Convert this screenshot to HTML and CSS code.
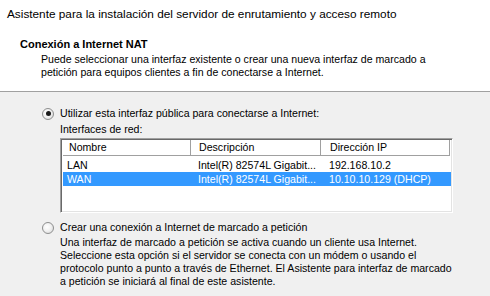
FILE: index.html
```html
<!DOCTYPE html>
<html lang="es">
<head>
  <meta charset="UTF-8">
  <title>Conexión a Internet NAT</title>
  <link rel="stylesheet" href="styles.css">
</head>
<body>
  <div class="header">
    <div class="title">Asistente para la instalación del servidor de enrutamiento y acceso remoto</div>
    <div class="heading">Conexión a Internet NAT</div>
    <div class="desc">Puede seleccionar una interfaz existente o crear una nueva interfaz de marcado a<br>petición para equipos clientes a fin de conectarse a Internet.</div>
  </div>

  <div class="content">
    <div class="option first">
      <span class="radio checked"></span>
      <span>Utilizar esta interfaz pública para conectarse a Internet:</span>
    </div>
    <div class="sub">
      <div class="list-label">Interfaces de red:</div>
      <div class="listbox">
        <div class="list-head">
          <div class="col c1">Nombre</div>
          <div class="col c2">Descripción</div>
          <div class="col c3">Dirección IP</div>
        </div>
        <div class="row">
          <div class="col c1">LAN</div>
          <div class="col c2">Intel(R) 82574L Gigabit...</div>
          <div class="col c3">192.168.10.2</div>
        </div>
        <div class="row selected">
          <div class="col c1">WAN</div>
          <div class="col c2">Intel(R) 82574L Gigabit...</div>
          <div class="col c3">10.10.10.129 (DHCP)</div>
        </div>
      </div>
    </div>

    <div class="option second">
      <span class="radio"></span>
      <span>Crear una conexión a Internet de marcado a petición</span>
    </div>
    <div class="sub note">Una interfaz de marcado a petición se activa cuando un cliente usa Internet.<br>Seleccione esta opción si el servidor se conecta con un módem o usando el<br>protocolo punto a punto a través de Ethernet. El Asistente para interfaz de marcado<br>a petición se iniciará al final de este asistente.</div>
  </div>
</body>
</html>
```

FILE: styles.css
```css
body {
  margin: 0;
  font-family: "Liberation Sans", Arial, sans-serif;
  font-size: 10.6px;
  color: #000;
  background-color: #f0f0f0;
  width: 490px;
  height: 296px;
  overflow: hidden;
}
.header {
  background-color: #fff;
  height: 92px;
  border-bottom: 1px solid #a0a0a0;
  box-sizing: border-box;
  padding-top: 6px;
}
.title {
  font-size: 11.8px;
  line-height: 16px;
  padding-left: 7px;
}
.heading {
  font-weight: bold;
  font-size: 11px;
  line-height: 13px;
  margin-top: 16px;
  padding-left: 20px;
}
.desc {
  line-height: 13px;
  margin-top: 2px;
  padding-left: 41px;
}
.content {
  padding-left: 42px;
}
.option {
  display: flex;
  align-items: center;
  gap: 6px;
  line-height: 13px;
}
.option.first {
  margin-top: 15px;
}
.option.second {
  margin-top: 8px;
}
.radio {
  width: 10px;
  height: 10px;
  border: 1px solid #8e8f8f;
  border-radius: 50%;
  background: radial-gradient(circle at 40% 40%, #fff 0, #f4f4f4 40%, #d4d4d4 100%);
  display: flex;
  align-items: center;
  justify-content: center;
  flex: none;
}
.radio.checked::after {
  content: "";
  width: 5px;
  height: 5px;
  border-radius: 50%;
  background-color: #1a1a1a;
}
.sub {
  padding-left: 18px;
}
.list-label {
  line-height: 13px;
  margin-top: 3px;
  margin-bottom: 2px;
}
.listbox {
  width: 393px;
  height: 75px;
  box-sizing: border-box;
  background-color: #fff;
  border-top: 1px solid #a0a0a0;
  border-left: 1px solid #a0a0a0;
  border-right: 1px solid #fff;
  border-bottom: 1px solid #fff;
  box-shadow: inset 1px 1px 0 #696969, inset -1px -1px 0 #e3e3e3;
  padding: 1px 2px 0 2px;
}
.list-head {
  display: flex;
  height: 16px;
  line-height: 15px;
  border-bottom: 1px solid #a0a0a0;
  width: 387px;
  box-sizing: border-box;
  margin-bottom: 2px;
}
.list-head .col {
  border-right: 1px solid #a0a0a0;
  border-left: 1px solid #fff;
}
.row {
  display: flex;
  height: 14px;
  line-height: 14px;
  width: 388px;
}
.row.selected {
  background-color: #3399ff;
  color: #fff;
}
.col {
  box-sizing: border-box;
  white-space: nowrap;
  overflow: hidden;
}
.c1 {
  width: 128px;
  padding-left: 5px;
}
.c2 {
  width: 130px;
  padding-left: 7px;
}
.c3 {
  width: 129px;
  padding-left: 8px;
}
.row .c1 {
  padding-left: 4px;
}
.note {
  line-height: 13px;
  margin-top: 2px;
}
```
